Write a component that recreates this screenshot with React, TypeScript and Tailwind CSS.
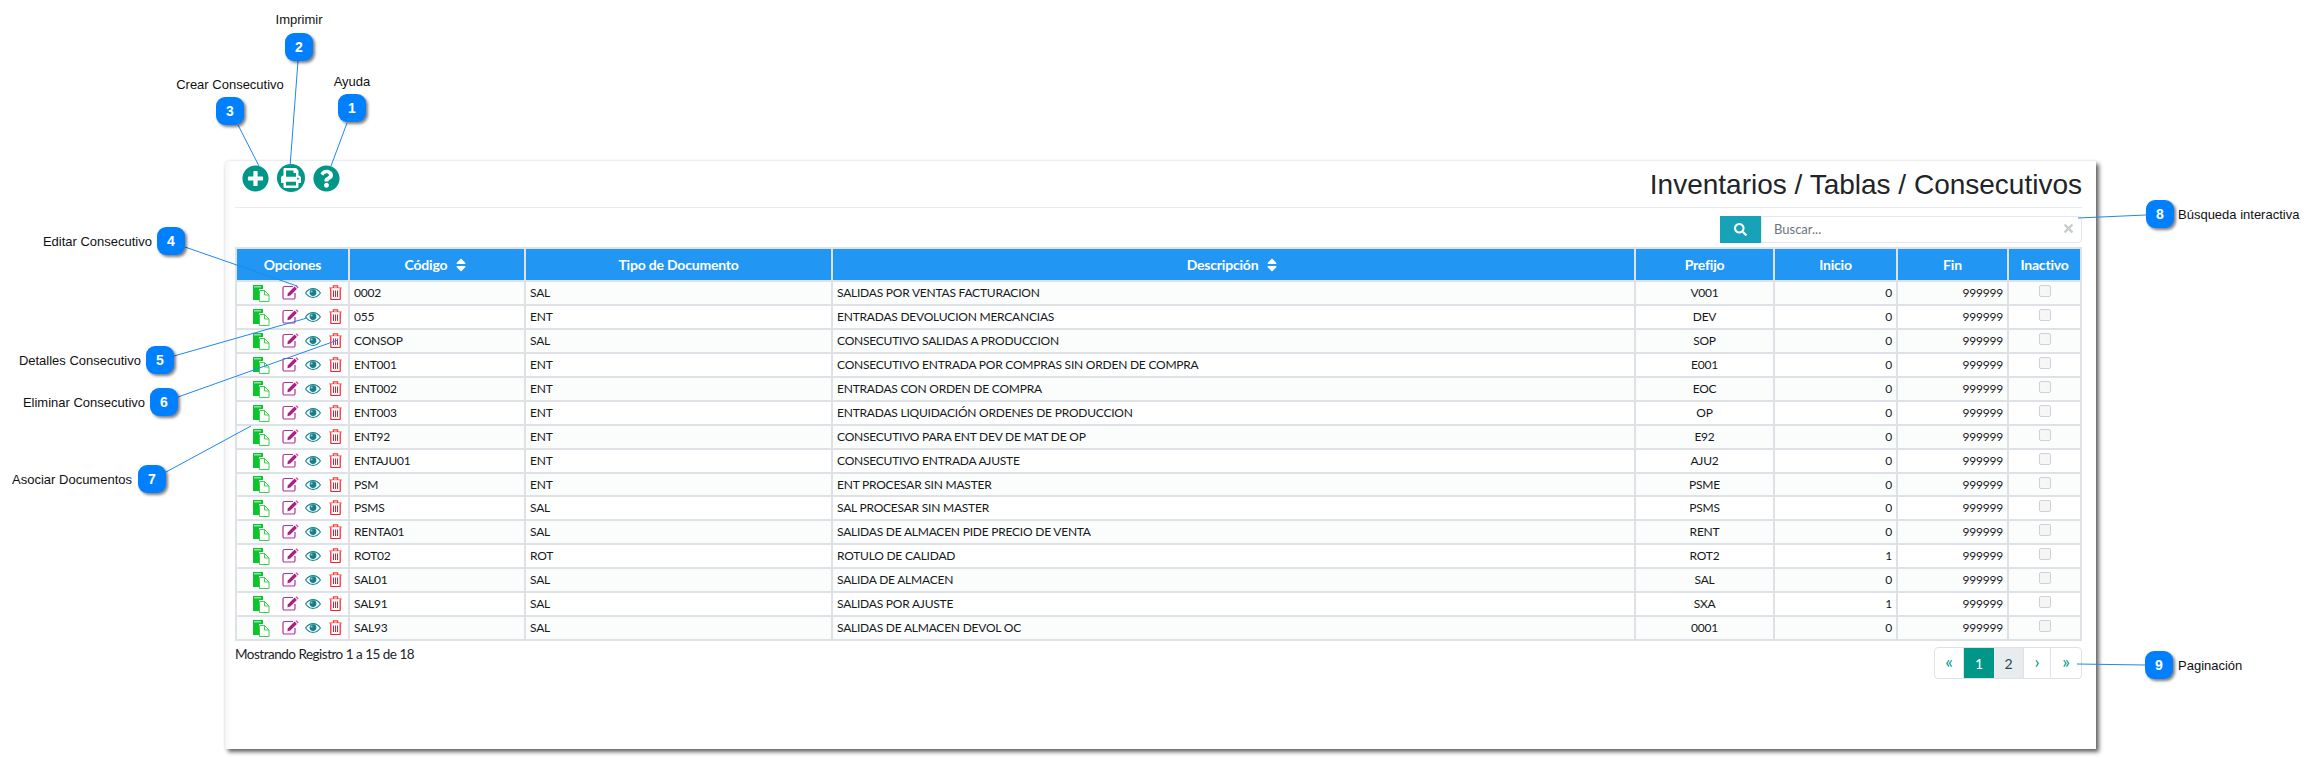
import { FaPlusCircle, FaPrint, FaQuestionCircle, FaSearch, FaSort, FaTimes } from 'react-icons/fa';

const ROWS = [
  { code: '0002', type: 'SAL', desc: 'SALIDAS POR VENTAS FACTURACION', prefix: 'V001', start: 0 },
  { code: '055', type: 'ENT', desc: 'ENTRADAS DEVOLUCION MERCANCIAS', prefix: 'DEV', start: 0 },
  { code: 'CONSOP', type: 'SAL', desc: 'CONSECUTIVO SALIDAS A PRODUCCION', prefix: 'SOP', start: 0 },
  { code: 'ENT001', type: 'ENT', desc: 'CONSECUTIVO ENTRADA POR COMPRAS SIN ORDEN DE COMPRA', prefix: 'E001', start: 0 },
  { code: 'ENT002', type: 'ENT', desc: 'ENTRADAS CON ORDEN DE COMPRA', prefix: 'EOC', start: 0 },
  { code: 'ENT003', type: 'ENT', desc: 'ENTRADAS LIQUIDACIÓN ORDENES DE PRODUCCION', prefix: 'OP', start: 0 },
  { code: 'ENT92', type: 'ENT', desc: 'CONSECUTIVO PARA ENT DEV DE MAT DE OP', prefix: 'E92', start: 0 },
  { code: 'ENTAJU01', type: 'ENT', desc: 'CONSECUTIVO ENTRADA AJUSTE', prefix: 'AJU2', start: 0 },
  { code: 'PSM', type: 'ENT', desc: 'ENT PROCESAR SIN MASTER', prefix: 'PSME', start: 0 },
  { code: 'PSMS', type: 'SAL', desc: 'SAL PROCESAR SIN MASTER', prefix: 'PSMS', start: 0 },
  { code: 'RENTA01', type: 'SAL', desc: 'SALIDAS DE ALMACEN PIDE PRECIO DE VENTA', prefix: 'RENT', start: 0 },
  { code: 'ROT02', type: 'ROT', desc: 'ROTULO DE CALIDAD', prefix: 'ROT2', start: 1 },
  { code: 'SAL01', type: 'SAL', desc: 'SALIDA DE ALMACEN', prefix: 'SAL', start: 0 },
  { code: 'SAL91', type: 'SAL', desc: 'SALIDAS POR AJUSTE', prefix: 'SXA', start: 1 },
  { code: 'SAL93', type: 'SAL', desc: 'SALIDAS DE ALMACEN DEVOL OC', prefix: '0001', start: 0 },
];

const CALLOUTS = [
  { n: 1, box: 'left-[338px] top-[94px]' },
  { n: 2, box: 'left-[285px] top-[33px]' },
  { n: 3, box: 'left-[216px] top-[97px]' },
  { n: 4, box: 'left-[157px] top-[227px]' },
  { n: 5, box: 'left-[146px] top-[346px]' },
  { n: 6, box: 'left-[150px] top-[388px]' },
  { n: 7, box: 'left-[138px] top-[465px]' },
  { n: 8, box: 'left-[2146px] top-[200px]' },
  { n: 9, box: 'left-[2145px] top-[651px]' },
];

const LABELS = [
  { text: 'Ayuda', pos: 'left-[352px] top-[82px] -translate-x-1/2' },
  { text: 'Imprimir', pos: 'left-[299px] top-[20px] -translate-x-1/2' },
  { text: 'Crear Consecutivo', pos: 'left-[230px] top-[85px] -translate-x-1/2' },
  { text: 'Editar Consecutivo', pos: 'right-[2162px] top-[242px]' },
  { text: 'Detalles Consecutivo', pos: 'right-[2173px] top-[361px]' },
  { text: 'Eliminar Consecutivo', pos: 'right-[2169px] top-[403px]' },
  { text: 'Asociar Documentos', pos: 'right-[2182px] top-[480px]' },
  { text: 'Búsqueda interactiva', pos: 'left-[2178px] top-[215px]' },
  { text: 'Paginación', pos: 'left-[2178px] top-[666px]' },
];

const LEADERS = [
  [347, 123, 331, 166],
  [298, 61, 290, 167],
  [238, 125, 259, 166],
  [185, 247, 297, 286],
  [174, 356, 307, 318],
  [178, 397, 338, 340],
  [166, 472, 251, 426],
  [2146, 215, 2078, 218],
  [2145, 665, 2077, 664],
];

function CopyIcon() {
  return (
    <svg width="17" height="17" viewBox="0 0 17 17" className="shrink-0">
      <path d="M0 0h10v4H6v11H0z" fill="#0cc52e" />
      <rect x="1" y="1" width="7" height="1.5" fill="#8fe29e" />
      <path d="M6.5 5.5h5l4.5 4.5v6.5H6.5z" fill="#fff" stroke="#3fd14f" />
      <path d="M11.5 5.5V10H16" fill="none" stroke="#3fd14f" />
    </svg>
  );
}

function EditIcon() {
  return (
    <svg width="17" height="15" viewBox="0 0 17 15" className="shrink-0">
      <path d="M11 1.5H2.5A1.5 1.5 0 0 0 1 3v9.5A1.5 1.5 0 0 0 2.5 14h9a1.5 1.5 0 0 0 1.5-1.5V8" fill="none" stroke="#b0338f" strokeWidth="1.2" />
      <path d="M6 8.2 12.6 1.6l2.3 2.3-6.6 6.6-3 .7z" fill="#a81f86" />
      <path d="M13.5 1.1 14.6.3l2 2-1 1.2z" fill="#d8559f" />
    </svg>
  );
}

function EyeIcon() {
  return (
    <svg width="16" height="10" viewBox="0 0 16 10" className="shrink-0">
      <path d="M.6 5C2.6 2 5 .6 8 .6S13.4 2 15.4 5C13.4 8 11 9.4 8 9.4S2.6 8 .6 5z" fill="#fff" stroke="#1b808c" strokeWidth="1.1" />
      <circle cx="8" cy="4.6" r="3.4" fill="#14808c" />
      <circle cx="6.6" cy="3.4" r="1" fill="#8fd0d6" />
    </svg>
  );
}

function TrashIcon() {
  return (
    <svg width="13" height="15" viewBox="0 0 13 15" className="shrink-0">
      <path d="M.3 3h12.4M4.4 3V.8h4.2V3" fill="none" stroke="#f93a35" strokeWidth="1.2" />
      <path d="M1.8 3.2v10.6a.8.8 0 0 0 .8.8h7.8a.8.8 0 0 0 .8-.8V3.2" fill="#fff" stroke="#f92028" strokeWidth="1.2" />
      <path d="M4.5 5.5v6.5M6.5 5.5v6.5M8.5 5.5v6.5" stroke="#e0203a" strokeWidth="1" />
    </svg>
  );
}

function Head({ label, sort }: { label: string; sort?: boolean }) {
  return (
    <th className="border-2 border-[#dee2e6] bg-[#2196f3] p-0 text-center text-[14px] font-bold tracking-[-0.2px] text-white">
      <span className="inline-flex items-center gap-[6px]">
        {label}
        {sort && <FaSort className="text-[16px]" />}
      </span>
    </th>
  );
}

export default function App() {
  return (
    <div className="relative h-[758px] w-[2314px] overflow-hidden bg-white pl-[225px] pt-[161px] font-['Lato',sans-serif] text-[#16191c]">
      <div className="flex h-[588px] w-[1871px] flex-col rounded-tl-[4px] bg-white pl-[10px] pr-[14px] shadow-[3px_3px_4px_rgba(0,0,0,0.6),0_0_3px_rgba(0,0,0,0.12),inset_8px_0_8px_-8px_rgba(0,0,0,0.08)]">
        {/* Toolbar */}
        <div className="flex h-[47px] shrink-0 items-start justify-between border-b border-[#e9ecef]">
          <div className="ml-[7px] mt-[3px] flex items-center gap-[8px] text-[#009688]">
            <FaPlusCircle className="text-[27px]" />
            <span className="flex h-[28px] w-[28px] items-center justify-center rounded-full bg-[#009688]">
              <FaPrint className="text-[20px] text-white" />
            </span>
            <FaQuestionCircle className="text-[27px]" />
          </div>
          <h1 className="mt-[6px] font-['Liberation_Sans',sans-serif] text-[28px] font-normal leading-[36px] text-[#212529]">
            Inventarios / Tablas / Consecutivos
          </h1>
        </div>

        {/* Search */}
        <div className="mt-[8px] flex h-[27px] shrink-0 justify-end">
          <span className="flex w-[41px] items-center justify-center bg-[#17a2b8] text-white">
            <FaSearch className="text-[13px]" />
          </span>
          <div className="flex w-[321px] items-center justify-between rounded-r-[4px] border border-[#e4e7ea] pl-[12px] pr-[6px] text-[13px] text-[#6c757d]">
            Buscar...
            <FaTimes className="mb-[2px] text-[13px] text-[#c8cdd0]" />
          </div>
        </div>

        {/* Table */}
        <table className="mt-[4px] w-[1847px] shrink-0 table-fixed border-collapse text-[12px] tracking-[-0.22px]">
          <colgroup>
            <col className="w-[113px]" />
            <col className="w-[176px]" />
            <col className="w-[307px]" />
            <col className="w-[803px]" />
            <col className="w-[139px]" />
            <col className="w-[123px]" />
            <col className="w-[111px]" />
            <col className="w-[73px]" />
          </colgroup>
          <thead>
            <tr className="h-[33px]">
              <Head label="Opciones" />
              <Head label="Código" sort />
              <Head label="Tipo de Documento" />
              <Head label="Descripción" sort />
              <Head label="Prefijo" />
              <Head label="Inicio" />
              <Head label="Fin" />
              <Head label="Inactivo" />
            </tr>
          </thead>
          <tbody>
            {ROWS.map((row, i) => (
              <tr key={row.code} className={`${row.code === 'PSM' ? 'h-[23px]' : 'h-[24px]'} ${i % 2 === 0 ? 'bg-[#fbfdfd]' : 'bg-white'}`}>
                <td className="border-2 border-[#dee2e6] p-0">
                  <div className="flex items-center pl-[16px]">
                    <CopyIcon />
                    <span className="mb-[1px] ml-[12px]"><EditIcon /></span>
                    <span className="ml-[6px]"><EyeIcon /></span>
                    <span className="mb-[1px] ml-[8px]"><TrashIcon /></span>
                  </div>
                </td>
                <td className="border-2 border-[#dee2e6] px-[4px] py-0">{row.code}</td>
                <td className="border-2 border-[#dee2e6] px-[4px] py-0">{row.type}</td>
                <td className="border-2 border-[#dee2e6] px-[4px] py-0">{row.desc}</td>
                <td className="border-2 border-[#dee2e6] px-[4px] py-0 text-center">{row.prefix}</td>
                <td className="border-2 border-[#dee2e6] px-[4px] py-0 text-right">{row.start}</td>
                <td className="border-2 border-[#dee2e6] px-[4px] py-0 text-right">999999</td>
                <td className="border-2 border-[#dee2e6] p-0 text-center">
                  <input type="checkbox" disabled className="mb-[5px] inline-block h-[12px] w-[12px] appearance-none rounded-[2px] border border-[#cfd2d4] bg-[#f6f6f6] align-middle" />
                </td>
              </tr>
            ))}
          </tbody>
        </table>

        {/* Footer */}
        <div className="mt-[5px] flex items-start justify-between">
          <span className="text-[13.5px] leading-[17px] tracking-[-0.5px] text-[#212529]">Mostrando Registro 1 a 15 de 18</span>
          <div className="mt-[1px] flex h-[32px] overflow-hidden rounded-[4px] border border-[#dee2e6] text-[14px] text-[#009688]">
            <span className="flex w-[29px] items-center justify-center border-r border-[#dee2e6] pb-[3px] text-[18px]">«</span>
            <span className="flex w-[30px] items-center justify-center bg-[#009688] text-white">1</span>
            <span className="flex w-[30px] items-center justify-center border-r border-[#dee2e6] bg-[#e9ecef] text-[#1b4d50]">2</span>
            <span className="flex w-[27px] items-center justify-center border-r border-[#dee2e6] pb-[3px] text-[18px]">›</span>
            <span className="flex w-[30px] items-center justify-center pb-[3px] text-[18px]">»</span>
          </div>
        </div>
      </div>

      {/* Annotations */}
      <svg className="pointer-events-none absolute left-0 top-0 h-[758px] w-[2314px]" viewBox="0 0 2314 758">
        {LEADERS.map(([x1, y1, x2, y2]) => (
          <line key={`${x1}-${y1}`} x1={x1} y1={y1} x2={x2} y2={y2} stroke="#1e88f0" strokeWidth="1" />
        ))}
      </svg>
      {CALLOUTS.map((c) => (
        <span
          key={c.n}
          className={`absolute ${c.box} flex h-[28px] w-[28px] items-center justify-center rounded-[9px] bg-[#0080ff] font-['Liberation_Sans',sans-serif] text-[14px] font-bold text-white shadow-[2px_2px_3px_rgba(0,0,0,0.5)]`}
        >
          {c.n}
        </span>
      ))}
      {LABELS.map((l) => (
        <span
          key={l.text}
          className={`absolute ${l.pos} -translate-y-1/2 whitespace-nowrap font-['Liberation_Sans',sans-serif] text-[13px] text-[#111]`}
        >
          {l.text}
        </span>
      ))}
    </div>
  );
}
